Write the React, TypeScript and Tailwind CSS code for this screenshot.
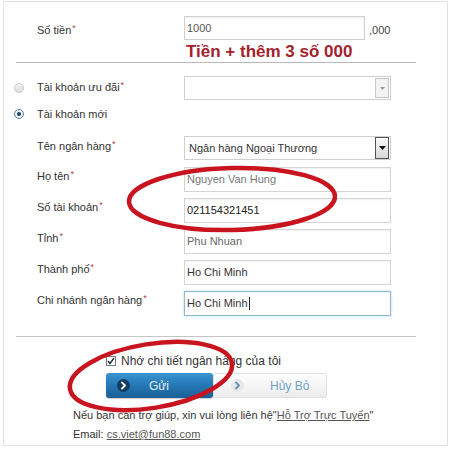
import React from "react";

const FIELDS = [
  { label: "Họ tên", value: "Nguyen Van Hung", color: "text-[#777]" },
  { label: "Số tài khoản", value: "021154321451", color: "text-[#222]" },
  { label: "Tỉnh", value: "Phu Nhuan", color: "text-[#666]" },
  { label: "Thành phố", value: "Ho Chi Minh", color: "text-[#333]" },
];

function Label({ text, star = true }: { text: string; star?: boolean }) {
  return (
    <span className="text-[11px] leading-[14px] text-[#333] whitespace-nowrap">
      {text}
      {star && <span className="text-[9px] leading-[9px] text-[#b04040] relative -top-[3px] ml-[1px]">*</span>}
    </span>
  );
}

function Chevron({ dark }: { dark: boolean }) {
  return (
    <svg width="13" height="13" viewBox="0 0 13 13">
      <circle cx="6.5" cy="6.5" r="6.5" fill={dark ? "#133c63" : "#e4e8ec"} />
      <path
        d="M5 3.5 L8 6.5 L5 9.5"
        fill="none"
        stroke={dark ? "#ffffff" : "#6f8faa"}
        strokeWidth="1.8"
        strokeLinecap="round"
        strokeLinejoin="round"
      />
    </svg>
  );
}

export default function App() {
  return (
    <div className="relative w-[454px] h-[450px] bg-white font-['Liberation_Sans',Arial,sans-serif] overflow-hidden">
      <div className="ml-[3px] mt-[1px] w-[445px] h-[445px] border border-[#e2e2e2] flex flex-col">
        {/* ── Amount ───────────────────────────────── */}
        <div className="flex items-start mt-[14px]">
          <div className="w-[180px] pl-[33px] pt-[1px]">
            <Label text="Số tiền" />
          </div>
          <div className="w-[181px] h-[24px] border border-[#cfcfcf] shadow-[inset_0_1px_2px_rgba(0,0,0,0.08)] flex items-center pl-[2px] text-[11px] text-[#555]">
            1000
          </div>
          <span className="ml-[4px] mt-[6px] text-[11px] text-[#444]">,000</span>
        </div>
        <div className="ml-[182px] h-[21px] text-[17px] leading-[21px] font-bold text-[#a3222c]">
          Tiền + thêm 3 số 000
        </div>
        <div className="ml-[12px] w-[400px] h-px bg-[#b9b9b9]" />

        {/* ── Account choice ───────────────────────── */}
        <div className="flex items-center mt-[13px]">
          <div className="w-[180px] flex items-center pl-[10px]">
            <span className="w-[10px] h-[10px] rounded-full border border-[#c9c9c9] bg-gradient-to-b from-[#f4f4f4] to-[#dcdcdc]" />
            <span className="ml-[13px] -mt-[2px] flex">
              <Label text="Tài khoản ưu đãi" />
            </span>
          </div>
          <div className="w-[207px] h-[24px] border border-[#cfcfcf] flex justify-end items-center pr-[1px]">
            <div className="w-[14px] h-[20px] border border-[#c4c4c4] bg-[#f3f3f3] flex items-center justify-center">
              <svg width="5" height="3" viewBox="0 0 5 3">
                <path d="M0 0 L5 0 L2.5 3 Z" fill="#9a9a9a" />
              </svg>
            </div>
          </div>
        </div>
        <div className="flex items-center mt-[5px] h-[18px] pl-[10px]">
          <span className="w-[10px] h-[10px] rounded-full border border-[#5b7d9c] bg-[#eef3f8] flex items-center justify-center">
            <span className="w-[4px] h-[4px] rounded-full bg-[#1c3f66]" />
          </span>
          <span className="ml-[13px] flex">
            <Label text="Tài khoản mới" star={false} />
          </span>
        </div>

        {/* ── Bank details ─────────────────────────── */}
        <div className="flex items-start mt-[13px]">
          <div className="w-[180px] pl-[33px] pt-[3px] flex">
            <Label text="Tên ngân hàng" />
          </div>
          <div className="w-[207px] h-[24px] border border-[#cfcfcf] flex items-center justify-between pl-[4px] pr-[1px]">
            <span className="text-[11px] text-[#333]">Ngân hàng Ngoại Thương</span>
            <div className="w-[14px] h-[22px] border border-[#555] bg-gradient-to-b from-[#fafafa] to-[#d8d8d8] flex items-center justify-center">
              <svg width="7" height="4" viewBox="0 0 7 4">
                <path d="M0 0 L7 0 L3.5 4 Z" fill="#111" />
              </svg>
            </div>
          </div>
        </div>

        <div className="flex flex-col gap-[6px] mt-[7px]">
          {FIELDS.map((f) => (
            <div key={f.label} className="flex items-start h-[25px]">
              <div className="w-[180px] pl-[33px] pt-[2px] flex">
                <Label text={f.label} />
              </div>
              <div
                className={`w-[207px] h-[25px] border border-[#d4d4d4] shadow-[inset_0_1px_2px_rgba(0,0,0,0.06)] flex items-center pl-[2px] text-[11px] ${f.color}`}
              >
                {f.value}
              </div>
            </div>
          ))}
          <div className="flex items-start h-[25px]">
            <div className="w-[180px] pl-[33px] pt-[2px] flex">
              <Label text="Chi nhánh ngân hàng" />
            </div>
            <div className="w-[207px] h-[25px] border border-[#8cbcc8] shadow-[0_0_2px_rgba(100,170,190,0.5)] flex items-center pl-[2px] text-[11px] text-[#333]">
              Ho Chi Minh
              <span className="ml-[1px] w-px h-[13px] bg-[#222]" />
            </div>
          </div>
        </div>

        <div className="ml-[12px] w-[400px] h-px bg-[#c4c4c4] mt-[20px]" />

        {/* ── Actions ──────────────────────────────── */}
        <div className="flex items-center ml-[102px] mt-[17px] h-[14px]">
          <span className="w-[10px] h-[10px] border border-[#777] bg-white flex items-center justify-center">
            <svg width="8" height="8" viewBox="0 0 8 8">
              <path d="M1 4 L3 6.5 L7 1" fill="none" stroke="#1a2a3a" strokeWidth="1.4" />
            </svg>
          </span>
          <span className="ml-[5px] text-[12px] text-[#333]">Nhớ chi tiết ngân hàng của tôi</span>
        </div>
        <div className="flex ml-[102px] mt-[5px] h-[25px]">
          <div className="w-[107px] h-full rounded-[3px] bg-gradient-to-b from-[#3a95d1] via-[#2477b5] to-[#1b5f96] flex items-center pl-[11px] shadow-[0_1px_1px_rgba(0,0,0,0.2)]">
            <Chevron dark />
            <span className="ml-[19px] text-[12px] text-[#e6f1fa]">Gửi</span>
          </div>
          <div className="w-[114px] h-full rounded-r-[3px] border border-[#e0e0e0] bg-gradient-to-b from-white to-[#ececec] flex items-center pl-[17px]">
            <Chevron dark={false} />
            <span className="ml-[26px] text-[12px] text-[#6ea2c8]">Hủy Bỏ</span>
          </div>
        </div>

        <div className="ml-[69px] mt-[8px] text-[11px] leading-[19px] text-[#333]">
          <div>
            Nếu bạn cần trợ giúp, xin vui lòng liên hệ"
            <span className="underline text-[#555]">Hỗ Trợ Trực Tuyến</span>"
          </div>
          <div>
            Email: <span className="underline text-[#555]">cs.viet@fun88.com</span>
          </div>
        </div>
      </div>

      {/* ── Hand-drawn red marks ─────────────────── */}
      <svg className="absolute left-[124px] top-[162px] pointer-events-none" width="216" height="74" viewBox="0 0 216 74">
        <ellipse cx="108" cy="37" rx="103" ry="31" fill="none" stroke="#c8141e" strokeWidth="4.5" transform="rotate(-1.5 108 37)" />
      </svg>
      <svg className="absolute left-[62px] top-[334px] pointer-events-none" width="180" height="84" viewBox="0 0 180 84">
        <ellipse cx="89" cy="42" rx="82" ry="32" fill="none" stroke="#c8141e" strokeWidth="4.5" transform="rotate(-9 89 42)" />
      </svg>
    </div>
  );
}
